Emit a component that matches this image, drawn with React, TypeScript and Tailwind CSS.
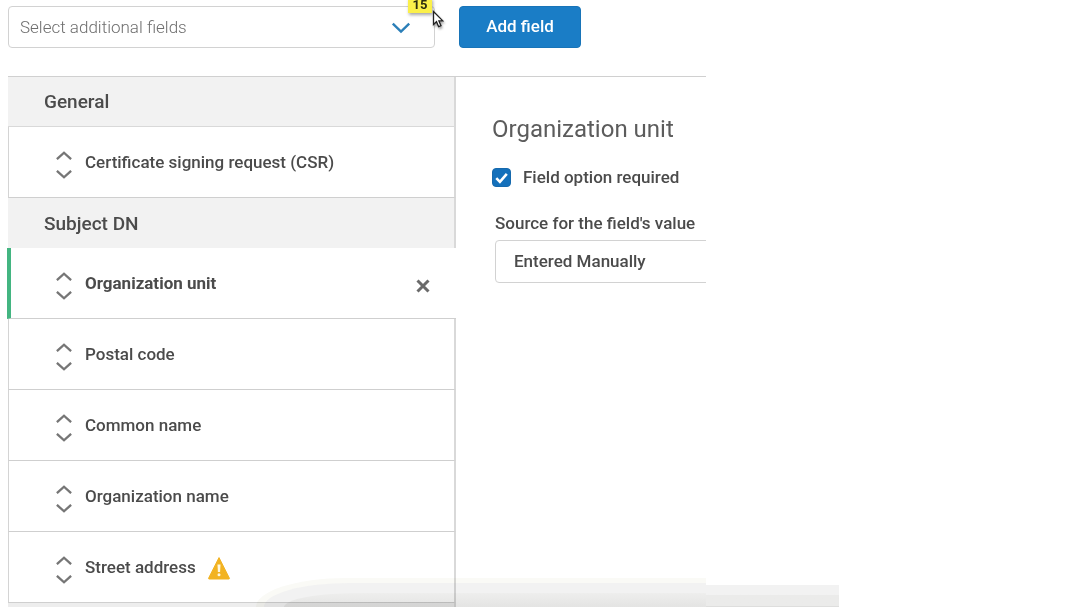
import { useState } from "react";

function MoveControls({ name }: { name: string }) {
  return (
    <div className="mt-1 flex w-4 flex-col items-center gap-2.5 text-[#767676]">
      <button type="button" aria-label={`Move ${name} up`} className="block">
        <svg viewBox="0 0 16 9" className="block h-[9px] w-4" fill="none" stroke="currentColor" strokeWidth="2.3">
          <path d="M0.9 8.2 8 1.7 15.1 8.2" />
        </svg>
      </button>
      <button type="button" aria-label={`Move ${name} down`} className="block">
        <svg viewBox="0 0 16 9" className="block h-[9px] w-4" fill="none" stroke="currentColor" strokeWidth="2.3">
          <path d="M0.9 0.8 8 7.3 15.1 0.8" />
        </svg>
      </button>
    </div>
  );
}

function WarningIcon() {
  return (
    <svg viewBox="0 0 24 24" className="ml-[11px] h-6 w-6" role="img" aria-label="Warning">
      <path d="M12 1.6 22.4 22.2a.6.6 0 0 1-.5.8H2.1a.6.6 0 0 1-.5-.8Z" fill="#f2b322" stroke="#f2b322" strokeWidth="1" strokeLinejoin="round" />
      <path d="M10.5 8.5h3l-.4 7.5h-2.2Z" fill="#fff8e0" />
      <circle cx="12" cy="18.8" r="1.5" fill="#fff8e0" />
    </svg>
  );
}

function SectionHeader({ children, last }: { children: string; last?: boolean }) {
  return (
    <h2
      className={
        "flex h-[50px] items-center border-r-2 border-[#d9d9d9] bg-[#f2f2f2] pt-0.5 pl-9 text-[19px] font-medium text-[#4b4b4b] " +
        (last ? "" : "border-b")
      }
    >
      {children}
    </h2>
  );
}

function FieldRow({ name, active, warning }: { name: string; active?: boolean; warning?: boolean }) {
  return (
    <li
      className={
        "flex h-[71px] items-center border-b border-b-[#cfcfcf] bg-white pt-px pr-6 " +
        (active
          ? "-ml-px border-l-4 border-l-[#43b581] pl-[45px]"
          : "border-r-2 border-l border-r-[#d9d9d9] border-l-[#d4d4d4] pl-[47px]")
      }
    >
      <MoveControls name={name} />
      <span className={"ml-[13px] text-[17px] text-[#4b4b4b] " + (active ? "font-bold" : "font-medium")}>{name}</span>
      {warning && <WarningIcon />}
      {active && (
        <button type="button" aria-label={`Remove ${name}`} className="mt-1 ml-auto mr-px block text-[#6b6b6b]">
          <svg viewBox="0 0 16 16" className="block h-4 w-4" fill="none" stroke="currentColor" strokeWidth="3">
            <path d="M2.5 2.5l11 11M13.5 2.5l-11 11" />
          </svg>
        </button>
      )}
    </li>
  );
}

export default function App() {
  const [required, setRequired] = useState(true);

  return (
    <div className="relative h-screen overflow-hidden bg-white pt-1.5 pl-2 font-['Roboto','Liberation_Sans',sans-serif]">
      <form className="flex gap-6" onSubmit={(e) => e.preventDefault()}>
        <div className="relative w-full max-w-[427px]">
          <select
            aria-label="Select additional fields"
            className="block h-[42px] w-full appearance-none rounded border border-[#d2d2d2] bg-white pt-px pl-[11px] text-[17px] font-light text-[#6e6e6e]"
          >
            <option>Select additional fields</option>
          </select>
          <svg viewBox="0 0 20 12" className="pointer-events-none absolute top-4 right-6 h-3 w-5" fill="none" stroke="#2b7fb8" strokeWidth="2.4">
            <path d="M1.8 1.6 10 9.6 18.2 1.6" />
          </svg>
          <span className="absolute -top-2 right-[3px] flex h-[15px] w-6 items-end justify-center bg-[#fbf04a] text-[13px] leading-[17px] font-bold text-[#2d2d10] shadow-[1px_2px_3px_rgba(0,0,0,0.35)]">
            15
          </span>
          <svg viewBox="0 0 12 19" className="absolute top-1 -right-[9px] h-[19px] w-3 drop-shadow-[1px_2px_1px_rgba(0,0,0,0.35)]">
            <path d="M1.5 1.5v13l3-2.8 2.1 5 2.4-1-2.1-4.8h3.9Z" fill="#fff" stroke="#222" strokeWidth="1.3" />
          </svg>
        </div>
        <button type="submit" className="h-[42px] w-[122px] shrink-0 rounded border border-[#1874b8] bg-[#1a7dc6] text-[17px] font-medium text-white">
          Add field
        </button>
      </form>

      <main className="mt-7 flex w-full max-w-[698px] border-t border-[#d0d0d0]">
        <nav aria-label="Certificate fields" className="w-full max-w-[448px]">
          <SectionHeader>General</SectionHeader>
          <ul>
            <FieldRow name="Certificate signing request (CSR)" />
          </ul>
          <SectionHeader last>Subject DN</SectionHeader>
          <ul>
            <FieldRow name="Organization unit" active />
            <FieldRow name="Postal code" />
            <FieldRow name="Common name" />
            <FieldRow name="Organization name" />
            <FieldRow name="Street address" warning />
          </ul>
          <div className="h-1 border-r-2 border-[#d9d9d9] bg-[#ededed]" />
        </nav>

        <section className="min-w-0 flex-1 overflow-hidden pt-9 pl-9">
          <h1 className="text-2xl leading-8 font-normal whitespace-nowrap text-[#5c5c5c]">Organization unit</h1>
          <label className="mt-5 flex items-center gap-3 text-[17px] leading-6 font-medium whitespace-nowrap text-[#4b4b4b]">
            <span className="relative block h-[19px] w-[19px]">
              <input
                type="checkbox"
                checked={required}
                onChange={(e) => setRequired(e.target.checked)}
                className="peer block h-[19px] w-[19px] appearance-none rounded border border-[#1669ad] checked:bg-[#1470bb]"
              />
              <svg viewBox="0 0 19 19" className="pointer-events-none invisible absolute inset-0 peer-checked:visible" fill="none" stroke="#fff" strokeWidth="2.6">
                <path d="M4.3 10.2 7.9 13.8 14.8 5.8" />
              </svg>
            </span>
            Field option required
          </label>
          <div className="mt-[22px] pl-[3px]">
            <label htmlFor="source" className="block text-[17px] leading-6 font-medium whitespace-nowrap text-[#4b4b4b]">
              Source for the field's value
            </label>
            <select
              id="source"
              className="mt-[5px] block h-[43px] w-[427px] appearance-none rounded border border-[#d2d2d2] bg-white pl-[18px] text-[17px] font-medium text-[#4b4b4b]"
            >
              <option>Entered Manually</option>
            </select>
          </div>
        </section>
      </main>

      <div aria-hidden="true" className="pointer-events-none absolute inset-x-0 bottom-px flex items-end pl-64 mix-blend-multiply">
        <div className="h-[29px] w-[450px] overflow-hidden rounded-tl-[90px_29px] bg-[#fafaf6] pt-[5px] pl-2">
          <div className="h-full overflow-hidden rounded-tl-[100px_28px] bg-[#f2f2f2] pt-2.5 pl-5">
            <div className="h-full rounded-tl-[100px_18px] bg-linear-to-b from-[#eeeeed] to-[#e4e4e3]" />
          </div>
        </div>
        <div className="h-[22px] w-[133px] border-b border-[#dededd] bg-linear-to-b from-[#f2f2f2] from-50% to-[#ebebea] to-50%" />
      </div>
    </div>
  );
}
